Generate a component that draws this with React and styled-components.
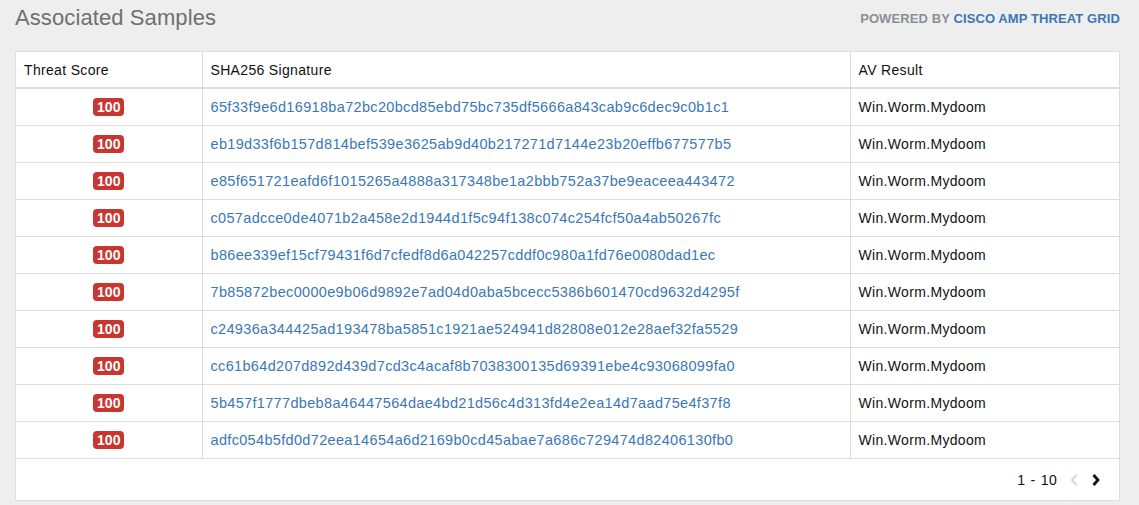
import React from "react";
import styled, { createGlobalStyle } from "styled-components";

const Global = createGlobalStyle`
  html, body { margin: 0; padding: 0; background: #eeeeee; }
  body { font-family: "Liberation Sans", Arial, sans-serif; }
`;

const Page = styled.div`
  padding: 0 19px 0 15px;
  width: 1139px;
  box-sizing: border-box;
`;

const TopBar = styled.div`
  display: flex;
  align-items: center;
  justify-content: space-between;
  height: 36px;
  margin-bottom: 15px;
`;

const Title = styled.h2`
  margin: 0;
  font-weight: 400;
  font-size: 22px;
  color: #707070;
  letter-spacing: 0.1px;
`;

const Powered = styled.div`
  font-size: 13px;
  font-weight: 700;
  color: #8a8f99;
  text-transform: uppercase;
  letter-spacing: 0.1px;
  span { color: #3a78b5; }
`;

const Panel = styled.div`
  background: #fff;
  border: 1px solid #dddddd;
  width: 1105px;
  box-sizing: border-box;
`;

const Table = styled.table`
  width: 100%;
  border-collapse: collapse;
  table-layout: fixed;
  font-size: 14px;
  letter-spacing: 0.33px;
`;

const Th = styled.th`
  text-align: left;
  font-weight: 400;
  color: #111;
  height: 36px;
  padding: 0 8px;
  border-bottom: 2px solid #dddddd;
  border-left: ${(p) => (p.$first ? "none" : "1px solid #dddddd")};
  width: ${(p) => p.$w || "auto"};
  box-sizing: border-box;
`;

const Td = styled.td`
  height: 36px;
  padding: 0 8px;
  border-bottom: 1px solid #dddddd;
  border-left: ${(p) => (p.$first ? "none" : "1px solid #dddddd")};
  text-align: ${(p) => (p.$center ? "center" : "left")};
  color: #111;
  white-space: nowrap;
`;

const Badge = styled.span`
  display: inline-block;
  background: #c9352f;
  color: #fff;
  font-weight: 700;
  font-size: 14px;
  letter-spacing: 0;
  line-height: 18px;
  padding: 0 4px;
  border-radius: 4px;
  vertical-align: middle;
`;

const HashLink = styled.a`
  color: #3a78b5;
  text-decoration: none;
  font-size: 14.5px;
  cursor: pointer;
`;

const Footer = styled.div`
  display: flex;
  justify-content: flex-end;
  align-items: center;
  height: 41px;
  padding-right: 12px;
  font-size: 14px;
  letter-spacing: 0.33px;
  color: #111;
`;

const Range = styled.span`
  margin-right: 6px;
  word-spacing: 1px;
`;

const PageBtn = styled.button`
  background: none;
  border: none;
  padding: 0 6px;
  display: flex;
  align-items: center;
  color: ${(p) => (p.disabled ? "#d6d6d6" : "#111")};
  cursor: ${(p) => (p.disabled ? "default" : "pointer")};
`;

const Chevron = ({ dir }) => (
  <svg width="10" height="14" viewBox="0 0 10 14">
    <path
      d={dir === "left" ? "M7.5 2 L3 7 L7.5 12" : "M2.5 2 L7 7 L2.5 12"}
      fill="none"
      stroke="currentColor"
      strokeWidth={dir === "left" ? 2 : 2.8}
    />
  </svg>
);

const rows = [
  "65f33f9e6d16918ba72bc20bcd85ebd75bc735df5666a843cab9c6dec9c0b1c1",
  "eb19d33f6b157d814bef539e3625ab9d40b217271d7144e23b20effb677577b5",
  "e85f651721eafd6f1015265a4888a317348be1a2bbb752a37be9eaceea443472",
  "c057adcce0de4071b2a458e2d1944d1f5c94f138c074c254fcf50a4ab50267fc",
  "b86ee339ef15cf79431f6d7cfedf8d6a042257cddf0c980a1fd76e0080dad1ec",
  "7b85872bec0000e9b06d9892e7ad04d0aba5bcecc5386b601470cd9632d4295f",
  "c24936a344425ad193478ba5851c1921ae524941d82808e012e28aef32fa5529",
  "cc61b64d207d892d439d7cd3c4acaf8b7038300135d69391ebe4c93068099fa0",
  "5b457f1777dbeb8a46447564dae4bd21d56c4d313fd4e2ea14d7aad75e4f37f8",
  "adfc054b5fd0d72eea14654a6d2169b0cd45abae7a686c729474d82406130fb0",
];

export default function App() {
  return (
    <>
      <Global />
      <Page>
        <TopBar>
          <Title>Associated Samples</Title>
          <Powered>
            Powered by <span>Cisco AMP Threat Grid</span>
          </Powered>
        </TopBar>
        <Panel>
          <Table>
            <thead>
              <tr>
                <Th $first $w="186px">Threat Score</Th>
                <Th $w="648px">SHA256 Signature</Th>
                <Th>AV Result</Th>
              </tr>
            </thead>
            <tbody>
              {rows.map((h) => (
                <tr key={h}>
                  <Td $first $center>
                    <Badge>100</Badge>
                  </Td>
                  <Td>
                    <HashLink>{h}</HashLink>
                  </Td>
                  <Td>Win.Worm.Mydoom</Td>
                </tr>
              ))}
            </tbody>
          </Table>
          <Footer>
            <Range>1 - 10</Range>
            <PageBtn disabled>
              <Chevron dir="left" />
            </PageBtn>
            <PageBtn>
              <Chevron dir="right" />
            </PageBtn>
          </Footer>
        </Panel>
      </Page>
    </>
  );
}
